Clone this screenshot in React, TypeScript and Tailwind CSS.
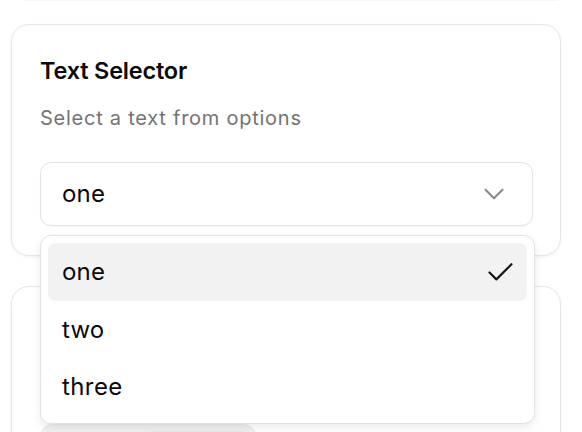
import React from "react";

function ChevronDown() {
  return (
    <svg width="34" height="34" viewBox="0 0 24 24" fill="none" stroke="#8a8a8a" strokeWidth="1.5" strokeLinecap="round" strokeLinejoin="round">
      <path d="m6 9 6 6 6-6" />
    </svg>
  );
}

function Check() {
  return (
    <svg width="33" height="33" viewBox="0 0 24 24" fill="none" stroke="#171717" strokeWidth="1.6" strokeLinecap="round" strokeLinejoin="round">
      <path d="M20 6 9 17l-5-5" />
    </svg>
  );
}

export default function App() {
  const font = { fontFamily: "Inter, 'Noto Sans', sans-serif" } as React.CSSProperties;
  return (
    <div className="w-[582px] h-[432px] overflow-hidden bg-white relative" style={font}>
      <div className="h-px ml-[24px] mr-[24px] bg-[#f7f7f7]" />
      <div className="flex flex-col gap-[30px] px-[11px] pt-[23px] w-[572px]">
        <div className="rounded-[18px] border border-[#e6e6e6] bg-white shadow-[0_1px_3px_rgba(0,0,0,0.06)] px-[28px] pt-[31px] pb-[29px]">
          <div className="text-[23.5px] leading-[30px] font-semibold text-[#0a0a0a] tracking-[-0.2px]">Text Selector</div>
          <div className="mt-[19px] text-[20px] leading-[26px] text-[#737373] tracking-[0.75px]">Select a text from options</div>
          <div className="relative mt-[31px]">
            <div className="h-[64px] w-[493px] rounded-[11px] border border-[#e3e3e3] bg-white flex items-center justify-between pl-[21px] pr-[21px] shadow-[0_1px_2px_rgba(0,0,0,0.03)]">
              <span className="text-[24px] text-[#0a0a0a] tracking-[0.2px]">one</span>
              <ChevronDown />
            </div>
            <div className="absolute left-0 top-[73px] z-10 w-[495px] rounded-[11px] border border-[#e3e3e3] bg-white shadow-[0_4px_10px_rgba(0,0,0,0.08)] p-[7px]">
              <div className="h-[58px] rounded-[8px] bg-[#f2f2f2] flex items-center justify-between pl-[14px] pr-[10px]">
                <span className="text-[24px] text-[#0a0a0a] tracking-[0.2px]">one</span>
                <Check />
              </div>
              <div className="h-[57px] flex items-center pl-[14px]">
                <span className="text-[24px] text-[#0a0a0a] tracking-[0.2px]">two</span>
              </div>
              <div className="h-[58px] flex items-center pl-[14px]">
                <span className="text-[24px] text-[#0a0a0a] tracking-[0.4px]">three</span>
              </div>
            </div>
          </div>
        </div>
        <div className="rounded-[18px] border border-[#e6e6e6] bg-white shadow-[0_1px_3px_rgba(0,0,0,0.06)] px-[28px] pt-[31px] pb-[29px]">
          <div className="h-[106px]" />
          <div className="h-[50px] w-[216px] rounded-[12px] bg-[#f0f0f0] border border-[#e8e8e8] flex p-[6px] justify-end">
            <div className="w-[104px] rounded-[8px] bg-[#fafafa] border border-[#e8e8e8]" />
          </div>
        </div>
      </div>
    </div>
  );
}
